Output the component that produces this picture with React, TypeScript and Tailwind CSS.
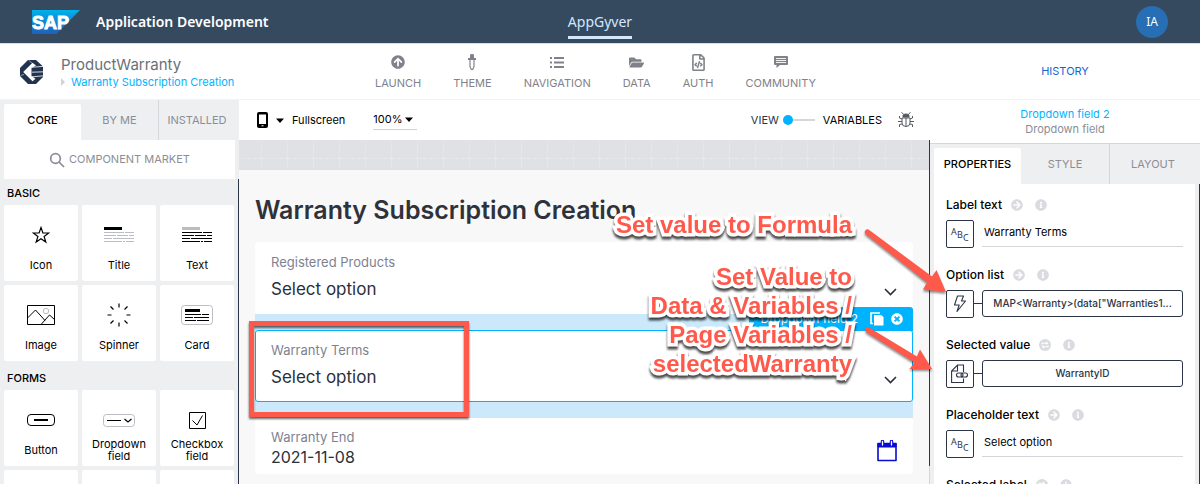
import React from "react";
import { FaArrowCircleUp, FaFolderOpen, FaRegFileCode, FaInfoCircle, FaArrowCircleRight, FaTimesCircle } from "react-icons/fa";

const line = { fill: "none", stroke: "currentColor" } as const;

function SapLogo() {
  return (
    <svg width="48" height="24" viewBox="0 0 48 24" role="img" aria-label="SAP">
      <defs>
        <linearGradient id="sap" x1="0" y1="0" x2="0" y2="1">
          <stop offset="0" stopColor="#00b1eb" />
          <stop offset="1" stopColor="#1e5fbb" />
        </linearGradient>
      </defs>
      <path d="M0 0H48L24.500 24H0Z" fill="url(#sap)" />
      <text x="0" y="18.500" fontFamily="Liberation Sans, sans-serif" fontWeight="700" fontSize="18" fill="#fff" stroke="#fff" strokeWidth="0.900">
        SAP
      </text>
    </svg>
  );
}

function ProductLogo() {
  return (
    <svg width="24" height="24" viewBox="0 0 24 24" aria-hidden="true">
      <path d="M8 0H16L22 5.500L23 7V17L16 24H8L0 16V8Z" fill="#22344d" />
      <path d="M12.500 2.800L3.200 12L12.500 21.200L15.500 18.800L11.500 16V8L16 5.500Z" fill="#fff" />
      <path d="M11 7.300L24 6.300M12 12.200L24 11.800M12 16.800L24 15.800" stroke="#fff" strokeWidth="0.800" />
      <path d="M0.500 15.500L4 14.500M8.500 0L12 3" stroke="#fff" strokeWidth="0.500" />
    </svg>
  );
}

function Caret() {
  return (
    <svg width="8" height="5" viewBox="0 0 8 5" aria-hidden="true">
      <path d="M0 0.500H8L4 5Z" fill="currentColor" />
    </svg>
  );
}

function ThemeIcon() {
  return (
    <svg width="10" height="17" viewBox="0 0 10 17" {...line}>
      <path d="M3 1Q3 0 5 0Q7 0 7 1V4H9V6H1V4H3Z" fill="currentColor" stroke="none" />
      <path d="M3 6V12.500L4.300 15.500H5.700L7 12.500V6" strokeWidth="1.200" />
    </svg>
  );
}

function ListIcon() {
  return (
    <svg width="14" height="11" viewBox="0 0 14 11" fill="currentColor">
      <path d="M0 0H2V2H0ZM0 4.500H2V6.500H0ZM0 9H2V11H0ZM4 0H14V2H4ZM4 4.500H14V6.500H4ZM4 9H14V11H4Z" />
    </svg>
  );
}

function CommunityIcon() {
  return (
    <svg width="14" height="12" viewBox="0 0 14 12">
      <path d="M1 0H13Q14 0 14 1V8Q14 9 13 9H6L2.500 12V9H1Q0 9 0 8V1Q0 0 1 0Z" fill="currentColor" />
      <path d="M2 2.500H12M2 4.500H12M2 6.500H12" stroke="#fff" strokeWidth="0.900" />
    </svg>
  );
}

function TextLines({ head, body }: { head: string; body: string }) {
  return (
    <svg width="30" height="16" viewBox="0 0 30 16">
      <path d="M0 0H18V3H0Z" fill={head} />
      <path d="M0 5.500H20M21 5.500H30M0 8.500H12M13 8.500H24M25 8.500H30M0 11.500H8M9 11.500H30M0 14.500H18M19 14.500H21M22 14.500H30" stroke={body} />
    </svg>
  );
}

function Chevron() {
  return (
    <svg width="13" height="8" viewBox="0 0 13 8" {...line} strokeWidth="1.600" className="pointer-events-none absolute right-[15px] top-[45px] text-[#2b2f38]" aria-hidden="true">
      <path d="M1 1L6.500 6.500L12 1" />
    </svg>
  );
}

const nav = [
  { label: "LAUNCH", icon: <FaArrowCircleUp size={14} /> },
  { label: "THEME", icon: <ThemeIcon /> },
  { label: "NAVIGATION", icon: <ListIcon /> },
  { label: "DATA", icon: <FaFolderOpen size={15} /> },
  { label: "AUTH", icon: <FaRegFileCode size={17} /> },
  { label: "COMMUNITY", icon: <CommunityIcon /> },
];

const basic = [
  {
    label: "Icon",
    icon: (
      <svg width="18" height="18" viewBox="0 0 18 18" {...line} strokeWidth="1.200">
        <path d="M9 1.500L10.900 6.900L16.700 7L12.100 10.400L13.800 16L9 12.700L4.200 16L5.900 10.400L1.300 7L7.100 6.900Z" />
      </svg>
    ),
  },
  { label: "Title", icon: <TextLines head="#000" body="#babdc4" /> },
  { label: "Text", icon: <TextLines head="#babdc4" body="#000" /> },
  {
    label: "Image",
    icon: (
      <svg width="28" height="20" viewBox="0 0 28 20" {...line}>
        <path d="M0.500 0.500H27.500V19.500H0.500ZM0.500 13L8.500 5L18 15.500M14 19.500L22.500 10L27.500 14.500" />
        <circle cx="19" cy="6" r="2.700" stroke="#babdc4" />
      </svg>
    ),
  },
  {
    label: "Spinner",
    icon: (
      <svg width="24" height="24" viewBox="0 0 24 24" {...line} strokeWidth="1.200">
        <path d="M12 0.500V4.500M12 19.500V23.500M0.500 12H4.500M19.500 12H23.500M3.500 3.500L6.500 6.500M17.500 17.500L20.500 20.500M20.500 3.500L17.500 6.500M6.500 17.500L3.500 20.500" />
      </svg>
    ),
  },
  {
    label: "Card",
    icon: (
      <svg width="32" height="20" viewBox="0 0 32 20" {...line}>
        <rect x="0.500" y="0.500" width="31" height="19" rx="3" stroke="#babdc4" />
        <path d="M4 4H19V7H4Z" fill="currentColor" stroke="none" />
        <path d="M4 9.500H20M21 9.500H28M4 12.500H12M13 12.500H28M4 15.500H15M16 15.500H28" />
      </svg>
    ),
  },
];

const forms = [
  {
    label: "Button",
    icon: (
      <svg width="28" height="12" viewBox="0 0 28 12" {...line}>
        <rect x="0.500" y="0.500" width="27" height="11" rx="3.500" />
        <path d="M7 6H21" strokeWidth="2" />
      </svg>
    ),
  },
  {
    label: "Dropdown field",
    icon: (
      <svg width="32" height="13" viewBox="0 0 32 13" {...line}>
        <rect x="0.500" y="0.500" width="31" height="12" rx="3" stroke="#babdc4" />
        <path d="M4 6.500H18M21.500 5L25 8L28.500 5" strokeWidth="1.200" />
      </svg>
    ),
  },
  {
    label: "Checkbox field",
    icon: (
      <svg width="17" height="17" viewBox="0 0 17 17" {...line}>
        <path d="M0.500 0.500H16.500V16.500H0.500ZM3.500 8.500L8 13L13.500 3.500" />
      </svg>
    ),
  },
  { label: "", icon: null },
  { label: "", icon: null },
  { label: "", icon: null },
];

function Palette({ title, items }: { title: string; items: { label: string; icon: React.ReactNode }[] }) {
  return (
    <section>
      <h2 className="flex h-[26px] items-center px-[3px] pt-[2px] text-[11px] font-medium">{title}</h2>
      <div className="grid grid-cols-3 gap-1">
        {items.map((item, i) => (
          <button key={i} className="flex h-[76px] flex-col items-center gap-1 rounded-xs bg-white pt-4">
            <span className="flex h-7 items-center">{item.icon}</span>
            <span className="flex h-6 items-center px-2 text-center text-[11px] leading-[12px]">{item.label}</span>
          </button>
        ))}
      </div>
    </section>
  );
}

function SwapIcon() {
  return (
    <svg width="12" height="12" viewBox="0 0 12 12">
      <circle cx="6" cy="6" r="6" fill="currentColor" />
      <path d="M3 5.500V4.200H7.500M9 6.500V7.800H4.500" stroke="#fff" strokeWidth="1.100" fill="none" />
      <path d="M7 2.300L9.300 4.200L7 6ZM5 6L2.700 7.800L5 9.700Z" fill="#fff" />
    </svg>
  );
}

function AbcIcon() {
  return (
    <svg width="22" height="22" viewBox="0 0 22 22" fill="currentColor" fontFamily="Noto Sans, sans-serif" fontSize="9" className="overflow-visible" aria-hidden="true">
      <text x="2" y="12">A</text>
      <text x="8" y="14.500">B</text>
      <text x="14" y="17.500">C</text>
    </svg>
  );
}

function BoltIcon() {
  return (
    <svg width="14" height="18" viewBox="0 0 14 18" {...line} strokeWidth="1.100" strokeLinejoin="round">
      <path d="M4.500 1H10.500L8.500 6H12.500L4 16.500L6.200 10H1.500Z" />
    </svg>
  );
}

function PageLinkIcon() {
  return (
    <svg width="18" height="20" viewBox="0 0 18 20" {...line} strokeWidth="1.100">
      <path d="M12.500 8V1H6.500L0.600 7V18.500H12.500V14.500M6.500 1V7H0.600" />
      <rect x="5.500" y="9" width="6.500" height="4" rx="2" />
      <rect x="10" y="9" width="6.500" height="4" rx="2" />
    </svg>
  );
}

function Field({ id, label, swap, icon, children }: { id: string; label: string; swap?: boolean; icon: React.ReactNode; children: React.ReactNode }) {
  return (
    <div>
      <div className="flex h-[17px] items-center gap-[9px]">
        <label htmlFor={id} className="text-[12px] font-medium leading-[17px]">{label}</label>
        <span className="flex gap-3 text-[#d9dbe0]">
          {swap ? <SwapIcon /> : <FaArrowCircleRight size={12} />}
          <FaInfoCircle size={12} />
        </span>
      </div>
      <div className="mt-[7px] flex text-[#2b3547]">
        <button aria-label={label + " type"} className="flex size-7 items-center justify-center rounded-xs border border-[#2b3547]">{icon}</button>
        {children}
      </div>
    </div>
  );
}

function TextValue({ id, value }: { id: string; value: string }) {
  return <input id={id} defaultValue={value} className="ml-2 h-[27px] min-w-0 flex-1 border-b border-[#d4d6da] px-[2px] pb-[2px] text-[11px] text-black outline-none" />;
}

function BoundValue({ id, value }: { id: string; value: string }) {
  return (
    <>
      <span className="mt-[13px] h-px w-2 bg-[#2b3547]" />
      <button id={id} className="h-[27px] min-w-0 flex-1 truncate rounded-[3px] border border-[#2b3547] px-2 text-[10px] font-medium">{value}</button>
    </>
  );
}

function SelectCard({ id, label, selected }: { id: string; label: string; selected?: boolean }) {
  return (
    <div className={"relative flex h-[72px] flex-col rounded-[3px] border bg-white px-[15px] pt-[11px] " + (selected ? "border-[#00b3ff]" : "border-white")}>
      <label htmlFor={id} className="text-[13px] leading-4 text-[#7e8290]">{label}</label>
      <select id={id} className="mt-[7px] h-6 w-full appearance-none bg-transparent text-[17px] leading-6 text-[#2b2f38] outline-none">
        <option>Select option</option>
      </select>
      <Chevron />
    </div>
  );
}

const note =
  "absolute right-[94px] whitespace-nowrap text-right font-['Liberation_Sans',Arial,sans-serif] text-[24px] font-bold leading-[29px] text-[#ff594c] [-webkit-text-stroke:7px_white] [paint-order:stroke_fill] [filter:drop-shadow(0_3px_1px_rgba(0,0,0,0.7))]";

function Annotations() {
  return (
    <div className="pointer-events-none absolute -left-[330px] top-[100px] z-20 h-[200px] w-[346px]">
      <p className={note + " top-[10px]"}>Set value to Formula</p>
      <p className={note + " top-[62px]"}>
        Set Value to
        <br />
        Data &amp; Variables /
        <br />
        Page Variables /
        <br />
        selectedWarranty
      </p>
      <svg viewBox="0 0 346 200" className="absolute inset-0 size-full [filter:drop-shadow(0_2px_1px_rgba(0,0,0,0.45))]" fill="#ff594c" aria-hidden="true">
        <path d="M268.500 29.500A2.800 2.800 0 0 0 265.500 34L327 82.500L323 89.500L346 92L336.500 70L332 76.500Z" />
        <path d="M269 127.500A2.800 2.800 0 0 0 266 132L314.500 162.500L309.500 169L332 169L320 149.500L317 156.500Z" />
      </svg>
    </div>
  );
}

export default function App() {
  return (
    <div className="flex h-screen min-w-[1000px] flex-col overflow-hidden bg-white font-['Inter','Noto_Sans',sans-serif] text-black">
      <header className="grid h-11 shrink-0 grid-cols-[1fr_auto_1fr] border-b border-[#d9dde6] bg-[#354a5f] font-['Noto_Sans','Open_Sans',sans-serif]">
        <div className="flex items-center gap-4 pl-8">
          <SapLogo />
          <h1 className="text-[14px] font-semibold text-white">Application Development</h1>
        </div>
        <a href="#appgyver" className="mt-[9px] h-[30px] self-start border-b-3 border-[#d1e8ff] pt-[2px] text-[14px] text-[#d1e8ff]">AppGyver</a>
        <div className="flex items-center justify-end pr-8">
          <button className="size-8 rounded-full bg-[#286eb4] text-[12px] text-white">IA</button>
        </div>
      </header>

      <div className="flex h-14 shrink-0 border-b border-[#f3f3f5]">
        <div className="flex w-[239px] items-center gap-[17px] pl-5">
          <ProductLogo />
          <div className="pt-[2px]">
            <p className="text-[15px] leading-[18px] text-[#6c6f78]">ProductWarranty</p>
            <a href="#page" className="flex items-center gap-[6px] text-[11px] leading-4 whitespace-nowrap text-[#00b3ff]">
              <svg width="4" height="8" viewBox="0 0 4 8" aria-hidden="true"><path d="M0 0L4 4L0 8Z" fill="#d0d2d8" /></svg>
              Warranty Subscription Creation
            </a>
          </div>
        </div>
        <nav className="flex flex-1 justify-center gap-8 pl-[22px] text-[#7f828a]">
          {nav.map((n) => (
            <a key={n.label} href={"#" + n.label.toLowerCase()} className="flex flex-col items-center pt-2 text-[11px]">
              <span className="flex h-5 items-center">{n.icon}</span>
              <span className="mt-[3px] leading-4">{n.label}</span>
            </a>
          ))}
        </nav>
        <div className="flex w-[270px] items-center justify-center">
          <a href="#history" className="text-[11px] text-[#1266cf]">HISTORY</a>
        </div>
      </div>

      <div className="flex min-h-0 flex-1">
        <aside className="flex w-[239px] shrink-0 flex-col bg-[#eeeff1]">
          <div role="tablist" className="flex h-10 shrink-0 pl-1 text-[11px] text-[#8b8e96]">
            <button role="tab" aria-selected="true" className="mt-1 w-[77px] rounded-t-xs bg-white pb-1 font-medium text-black">CORE</button>
            <button role="tab" className="w-[77px]">BY ME</button>
            <button role="tab" className="flex-1 border-l border-[#d4d6da] pr-1">INSTALLED</button>
          </div>
          <button className="ml-1 mr-1 flex h-[39px] shrink-0 items-center justify-center gap-1 bg-white text-[11px] text-[#8b8e96]">
            <svg width="16" height="16" viewBox="0 0 16 16" {...line} strokeWidth="1.700" aria-hidden="true">
              <circle cx="6.500" cy="6.500" r="4.800" />
              <path d="M10 10L15 15" />
            </svg>
            COMPONENT MARKET
          </button>
          <div className="flex min-h-0 flex-1 flex-col gap-[3px] overflow-hidden border-r border-[#2b3547] pl-1 pr-1">
            <Palette title="BASIC" items={basic} />
            <Palette title="FORMS" items={forms} />
          </div>
        </aside>

        <main className="flex min-w-0 flex-1 flex-col">
          <div className="flex h-10 shrink-0 items-center px-4 text-[11px]">
            <button aria-label="Device" className="flex items-center gap-2 px-[2px]">
              <svg width="11" height="16" viewBox="0 0 11 16">
                <path d="M2 0H9Q11 0 11 2V14Q11 16 9 16H2Q0 16 0 14V2Q0 0 2 0ZM2 2.500V12H9V2.500Z" fill="currentColor" fillRule="evenodd" />
                <path d="M4.500 13.800H6.500" stroke="#fff" />
              </svg>
              <Caret />
            </button>
            <button className="ml-[6px]">Fullscreen</button>
            <div className="relative ml-7 flex items-center border-b border-[#cfd1d6]">
              <select aria-label="Zoom" className="h-[19px] w-[44px] appearance-none bg-transparent text-[11px] outline-none">
                <option>100%</option>
              </select>
              <span className="pointer-events-none absolute right-1"><Caret /></span>
            </div>
            <label className="ml-auto flex items-center">
              <span className="text-[#2b3547]">VIEW</span>
              <input type="checkbox" role="switch" className="sr-only" />
              <span className="ml-1 size-[10px] rounded-full bg-[#00b3ff]" />
              <span className="h-[2px] w-[22px] bg-[#d4d6da]" />
              <span className="ml-2">VARIABLES</span>
            </label>
            <button aria-label="Debug" className="ml-4 text-[#555962]">
              <svg width="16" height="16" viewBox="0 0 16 16" {...line}>
                <path d="M5 3.500Q5 2 8 2Q11 2 11 3.500V5H5Z" fill="currentColor" />
                <path d="M4 6H12V11Q12 14.500 8 14.500Q4 14.500 4 11ZM8 6V14.500M5.500 2L3.500 0.500M10.500 2L12.500 0.500M4 7L1.500 6V4M12 7L14.500 6V4M4 9.500H0M12 9.500H16M4 12L1.500 12.500V15M12 12L14.500 12.500V15" />
              </svg>
            </button>
          </div>

          <div className="flex min-h-0 flex-1 bg-[#f8f8f8]">
            <div className="min-w-0 flex-1 overflow-hidden">
              <div className="h-[30px] bg-[#e0e1e5]">
                <svg className="size-full" aria-hidden="true">
                  <defs>
                    <pattern id="grid" x="22" y="18" width="26" height="26" patternUnits="userSpaceOnUse">
                      <path d="M0.500 0V26M0 0.500H26" stroke="#e7e8eb" strokeDasharray="4 2" />
                    </pattern>
                  </defs>
                  <rect width="100%" height="100%" fill="url(#grid)" />
                </svg>
              </div>
              <div className="px-4 pt-6">
                <h2 className="text-[25px] font-semibold leading-8 text-[#2f323b]">Warranty Subscription Creation</h2>
                <div className="mt-4">
                  <SelectCard id="products" label="Registered Products" />
                  <div className="relative bg-[#cbe9fa] py-4">
                    <SelectCard id="terms" label="Warranty Terms" selected />
                    <div className="absolute -top-[7px] right-0 flex h-6 items-center rounded-t-[3px] bg-[#00b3ff] pl-3 pr-[10px] text-[12px] text-white">
                      <span className="mr-3">Dropdown field 2</span>
                      <svg width="14" height="14" viewBox="0 0 14 14" aria-hidden="true">
                        <path d="M4 3H11L13.500 5V13.500H4Z" fill="#fff" />
                        <path d="M10 1H1V11.500H3" fill="none" stroke="#fff" strokeWidth="1.600" />
                      </svg>
                      <FaTimesCircle size={12} className="ml-[7px]" />
                    </div>
                    <div className="pointer-events-none absolute -left-[6px] top-[7px] h-24 w-[220px] border-5 border-[#ff594c] [filter:drop-shadow(0_2px_1px_rgba(0,0,0,0.6))]" />
                  </div>
                  <div className="flex h-14 items-center justify-between rounded-[3px] bg-white px-4 pt-[5px]">
                    <div className="flex flex-col">
                      <label htmlFor="end" className="text-[13px] leading-4 text-[#7e8290]">Warranty End</label>
                      <input id="end" defaultValue="2021-11-08" className="h-[23px] bg-transparent text-[16px] text-[#2b2f38] outline-none" />
                    </div>
                    <svg width="20" height="22" viewBox="0 0 20 22" {...line} className="mt-1 text-[#0b0bd0]" aria-hidden="true">
                      <path d="M1 3.500H19V20.500H1Z" strokeWidth="1.600" strokeLinejoin="round" />
                      <path d="M1 3.500H19V7H1Z" fill="currentColor" />
                      <path d="M5.500 1.500V5M14.500 1.500V5" strokeWidth="3.500" strokeLinecap="round" />
                      <path d="M5.500 1.500V5M14.500 1.500V5" strokeWidth="1.300" stroke="#fff" strokeLinecap="round" />
                    </svg>
                  </div>
                </div>
              </div>
            </div>
            <div className="flex w-px flex-col">
              <span className="flex-1 bg-[#2b3547]" />
              <span className="h-[18px] bg-[#d4d6da]" />
            </div>
          </div>
        </main>

        <aside className="relative flex w-[270px] shrink-0 flex-col bg-[#eeeff1]">
          <div className="flex h-11 shrink-0 flex-col items-center border-b border-[#d4d6da] bg-white pt-[7px] text-[11px] leading-[15px]">
            <p className="text-[#00b3ff]">Dropdown field 2</p>
            <p className="text-[#8b8e96]">Dropdown field</p>
          </div>
          <div role="tablist" className="flex h-10 shrink-0 px-1 text-[11px] text-[#8b8e96]">
            <button role="tab" aria-selected="true" className="mt-1 w-[87px] rounded-t-xs bg-white pb-1 font-medium text-black">PROPERTIES</button>
            <button role="tab" className="w-[88px]">STYLE</button>
            <button role="tab" className="flex-1 border-l border-[#d4d6da]">LAYOUT</button>
          </div>
          <div className="flex min-h-0 flex-1 overflow-hidden border-r border-[#2b3547] pl-1 pr-1">
            <div className="flex min-w-0 flex-1 flex-col gap-[18px] bg-white px-3 pt-3">
              <Field id="label-text" label="Label text" icon={<AbcIcon />}>
                <TextValue id="label-text" value="Warranty Terms" />
              </Field>
              <Field id="option-list" label="Option list" icon={<BoltIcon />}>
                <BoundValue id="option-list" value={'MAP<Warranty>(data["Warranties1...'} />
              </Field>
              <Field id="selected-value" label="Selected value" swap icon={<PageLinkIcon />}>
                <BoundValue id="selected-value" value="WarrantyID" />
              </Field>
              <Field id="placeholder-text" label="Placeholder text" icon={<AbcIcon />}>
                <TextValue id="placeholder-text" value="Select option" />
              </Field>
              <Field id="selected-label" label="Selected label" swap icon={<AbcIcon />}>
                <TextValue id="selected-label" value="" />
              </Field>
            </div>
          </div>
          <Annotations />
        </aside>
      </div>
    </div>
  );
}
